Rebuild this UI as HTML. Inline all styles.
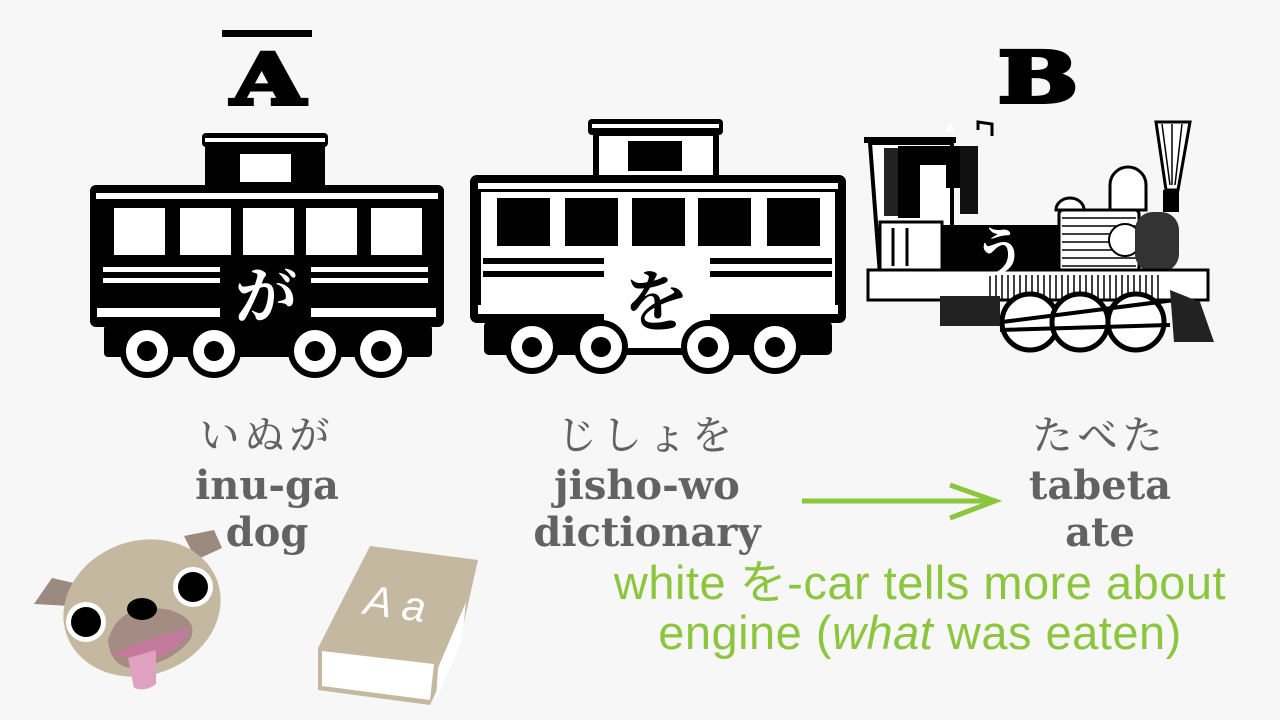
<!DOCTYPE html>
<html><head><meta charset="utf-8"><style>
html,body{margin:0;padding:0;}
body{width:1280px;height:720px;background:#f7f7f7;position:relative;overflow:hidden;font-family:"Liberation Sans","Noto Sans CJK JP",sans-serif;}
.t{position:absolute;text-align:center;color:#626262;white-space:nowrap;}
.k{font-size:40px;letter-spacing:5px;font-family:"Noto Serif CJK SC","Noto Sans CJK JP",serif;font-weight:500;line-height:50px;}
.r{font-family:"DejaVu Serif",serif;font-size:40px;font-weight:bold;line-height:47px;}
.g{position:absolute;color:#8cc63f;font-size:47px;letter-spacing:0.5px;white-space:nowrap;text-align:center;}
</style></head><body>
<svg width="1280" height="720" style="position:absolute;left:0;top:0">
<rect x="222" y="30" width="90" height="7" fill="#000"/>
<text x="268" y="104" font-family="DejaVu Serif" font-weight="bold" font-size="70" text-anchor="middle" fill="#000" stroke="#000" stroke-width="4" transform="translate(268 0) scale(1.35 1) translate(-268 0)">A</text>
<text x="1038" y="102" font-family="DejaVu Serif" font-weight="bold" font-size="70" text-anchor="middle" fill="#000" stroke="#000" stroke-width="4" transform="translate(1038 0) scale(1.35 1) translate(-1038 0)">B</text>
<!-- Car A black -->
<g>
<rect x="202" y="133" width="126" height="14" rx="4" fill="#000"/>
<rect x="205" y="138" width="120" height="4" fill="#fff"/>
<rect x="205" y="145" width="120" height="45" fill="#000"/>
<rect x="240" y="154" width="51" height="28" fill="#fff"/>
<rect x="90" y="185" width="354" height="142" rx="6" fill="#000"/>
<rect x="96" y="193" width="342" height="6" fill="#fff"/>
<rect x="114" y="208" width="51" height="47" fill="#fff"/>
<rect x="180" y="208" width="51" height="47" fill="#fff"/>
<rect x="243" y="208" width="51" height="47" fill="#fff"/>
<rect x="306" y="208" width="51" height="47" fill="#fff"/>
<rect x="371" y="208" width="51" height="47" fill="#fff"/>
<rect x="103" y="267" width="117" height="5" fill="#fff"/>
<rect x="103" y="278" width="117" height="5" fill="#fff"/>
<rect x="311" y="267" width="117" height="5" fill="#fff"/>
<rect x="311" y="278" width="117" height="5" fill="#fff"/>
<rect x="97" y="308" width="123" height="9" fill="#fff"/>
<rect x="311" y="308" width="125" height="9" fill="#fff"/>
<rect x="104" y="325" width="328" height="32" rx="4" fill="#000"/>
<g fill="#fff" stroke="#000" stroke-width="6">
<circle cx="147" cy="351" r="24"/><circle cx="214" cy="351" r="24"/><circle cx="315" cy="351" r="24"/><circle cx="381" cy="351" r="24"/></g>
<g fill="#000"><circle cx="147" cy="351" r="10"/><circle cx="214" cy="351" r="10"/><circle cx="315" cy="351" r="10"/><circle cx="381" cy="351" r="10"/></g>
<text x="266" y="318" font-family="Noto Serif CJK SC" font-weight="bold" font-size="62" text-anchor="middle" fill="#fff">が</text>
</g>
<!-- Car B white -->
<g>
<rect x="588" y="119" width="135" height="16" rx="4" fill="#000"/>
<rect x="592" y="124" width="127" height="4" fill="#fff"/>
<rect x="596" y="133" width="120" height="54" fill="#fff" stroke="#000" stroke-width="6"/>
<rect x="628" y="141" width="54" height="30" fill="#000"/>
<rect x="470" y="175" width="376" height="148" rx="7" fill="#000"/>
<rect x="478" y="183" width="360" height="6" fill="#fff"/>
<rect x="481" y="192" width="354" height="118" fill="#fff"/>
<rect x="478" y="305" width="360" height="9" fill="#fff"/>
<rect x="497" y="198" width="53" height="48" fill="#000"/>
<rect x="565" y="198" width="53" height="48" fill="#000"/>
<rect x="632" y="198" width="53" height="48" fill="#000"/>
<rect x="698" y="198" width="53" height="48" fill="#000"/>
<rect x="767" y="198" width="53" height="48" fill="#000"/>
<rect x="483" y="258" width="122" height="6" fill="#000"/>
<rect x="483" y="271" width="122" height="6" fill="#000"/>
<rect x="710" y="258" width="122" height="6" fill="#000"/>
<rect x="710" y="271" width="122" height="6" fill="#000"/>
<rect x="484" y="321" width="348" height="34" rx="5" fill="#000"/>
<rect x="604" y="258" width="106" height="90" fill="#fff"/>
<g fill="#fff" stroke="#000" stroke-width="6">
<circle cx="532" cy="347" r="24"/><circle cx="601" cy="347" r="24"/><circle cx="708" cy="347" r="24"/><circle cx="775" cy="347" r="24"/></g>
<g fill="#000"><circle cx="532" cy="347" r="10"/><circle cx="601" cy="347" r="10"/><circle cx="708" cy="347" r="10"/><circle cx="775" cy="347" r="10"/></g>
<text x="656" y="325" font-family="Noto Serif CJK SC" font-weight="bold" font-size="66" text-anchor="middle" fill="#000">を</text>
</g>
<!-- Locomotive -->
<g stroke="#000" fill="none">
<rect x="864" y="137" width="92" height="6" fill="#000" stroke="none"/>
<path d="M978 130 l0 -8 l14 2 l0 12" stroke-width="3"/>
<path d="M870 143 H952 V275 H880 Z" fill="#fff" stroke-width="4"/>
<rect x="884" y="148" width="14" height="68" fill="#222" stroke="none"/>
<path d="M898 146 H962 V188 H920 V218 H898 Z" fill="#000" stroke="none"/>
<rect x="920" y="160" width="36" height="28" fill="#000" stroke="none"/>
<rect x="920" y="165" width="26" height="52" fill="#fff" stroke="none"/>
<rect x="960" y="146" width="18" height="68" fill="#111" stroke="none"/>
<path d="M945 132 l5 -10 l5 10z" fill="#fff" stroke="none"/>
<rect x="880" y="222" width="62" height="48" fill="#fff" stroke-width="3"/>
<path d="M893 228 V266 M907 228 V266" stroke-width="3"/>
<rect x="943" y="225" width="116" height="50" fill="#000" stroke="none"/>
<rect x="1059" y="210" width="80" height="62" rx="4" fill="#fff" stroke-width="3"/>
<g stroke-width="1.5"><path d="M1062 218 h74 M1062 226 h74 M1062 234 h74 M1062 242 h74 M1062 250 h74 M1062 258 h74 M1062 266 h74"/></g>
<circle cx="1125" cy="240" r="16" fill="#fff" stroke-width="2"/>
<rect x="1135" y="212" width="44" height="60" rx="18" fill="#333" stroke="none"/>
<path d="M1156 122 L1190 122 L1178 190 L1166 190 Z" fill="#fff" stroke-width="3"/>
<path d="M1162 124 L1170 185 M1172 124 L1172 185 M1182 124 L1175 185" stroke-width="1.5"/>
<rect x="1163" y="190" width="16" height="22" fill="#000" stroke="none"/>
<path d="M1110 185 a18 18 0 0 1 36 0 v25 h-36 z" fill="#fff" stroke-width="3"/>
<path d="M1056 210 a14 12 0 0 1 28 0 z" fill="#fff" stroke-width="3"/>
<rect x="868" y="270" width="340" height="30" fill="#fff" stroke-width="3"/>
<g stroke-width="1.5"><path d="M990 275 V300 M996 275 V300 M1002 275 V300 M1008 275 V300 M1014 275 V300 M1020 275 V300 M1026 275 V300 M1032 275 V300 M1038 275 V300 M1044 275 V300 M1050 275 V300 M1056 275 V300 M1062 275 V300 M1068 275 V300 M1074 275 V300 M1080 275 V300 M1086 275 V300 M1092 275 V300 M1098 275 V300 M1104 275 V300 M1110 275 V300 M1116 275 V300 M1122 275 V300 M1128 275 V300 M1134 275 V300 M1140 275 V300 M1146 275 V300 M1152 275 V300 M1158 275 V300"/></g>
<circle cx="1030" cy="322" r="28" fill="#fff" stroke-width="5"/>
<circle cx="1080" cy="322" r="28" fill="#fff" stroke-width="5"/>
<circle cx="1136" cy="322" r="28" fill="#fff" stroke-width="5"/>
<path d="M1002 322 L1175 300 M1000 330 L1170 325" stroke-width="4"/>
<path d="M1170 290 l30 12 l14 40 l-40 0 z" fill="#222" stroke="none"/>
<rect x="940" y="296" width="60" height="30" fill="#222" stroke="none"/>
<text x="1000" y="272" font-family="Noto Serif CJK SC" font-weight="bold" font-size="54" text-anchor="middle" fill="#fff" stroke="none">う</text>
</g>
<!-- arrow -->
<path d="M802 501 H990" stroke="#8cc63f" stroke-width="5"/>
<path d="M950 485 L995 501 L950 518" stroke="#8cc63f" stroke-width="5" fill="none"/>
<!-- dog -->
<path d="M34 604 L52 578 L78 584 L70 606 Z" fill="#9a8a80"/>
<path d="M184 536 L214 530 L222 548 L196 560 Z" fill="#9a8a80"/>
<ellipse cx="142" cy="608" rx="80" ry="67" transform="rotate(-20 142 608)" fill="#c4b8a0"/>
<path d="M108 640 Q120 600 170 610 Q200 620 190 640 Q170 665 130 668 Q110 665 108 640Z" fill="#a48c84"/>
<path d="M112 655 Q140 640 190 628 Q180 652 150 660 Z" fill="#c47a9c"/>
<path d="M128 658 L156 650 L156 684 Q146 692 134 688 Z" fill="#e0a0c0"/>
<circle cx="86" cy="622" r="20" fill="#fff"/><circle cx="86" cy="622" r="15" fill="#000"/>
<circle cx="193" cy="587" r="20" fill="#fff"/><circle cx="193" cy="587" r="15" fill="#000"/>
<ellipse cx="142" cy="609" rx="15" ry="11" fill="#000"/>
<!-- book -->
<path d="M370 546 L478 560 L460 640 L430 705 L318 690 L318 648 Z" fill="#c4b8a0"/>
<path d="M322 651 L434 664 L430 700 L322 686 Z" fill="#fff"/>
<path d="M438 668 L466 602 L462 640 L436 700 Z" fill="#fff"/>
<text x="395" y="618" font-family="Liberation Sans" font-style="italic" font-size="42" fill="#fff" text-anchor="middle" transform="rotate(8 395 605)">A a</text>
</svg>
<div class="t k" style="left:167px;top:408px;width:200px">いぬが</div>
<div class="t r" style="left:117px;top:462px;width:300px">inu-ga<br>dog</div>
<div class="t k" style="left:497px;top:408px;width:300px">じしょを</div>
<div class="t r" style="left:447px;top:462px;width:400px">jisho-wo<br>dictionary</div>
<div class="t k" style="left:1000px;top:408px;width:200px">たべた</div>
<div class="t r" style="left:950px;top:462px;width:300px">tabeta<br>ate</div>
<div class="g" style="left:560px;top:558px;width:720px;line-height:50px">white を-car tells more about<br>engine (<i>what</i> was eaten)</div>
</body></html>
